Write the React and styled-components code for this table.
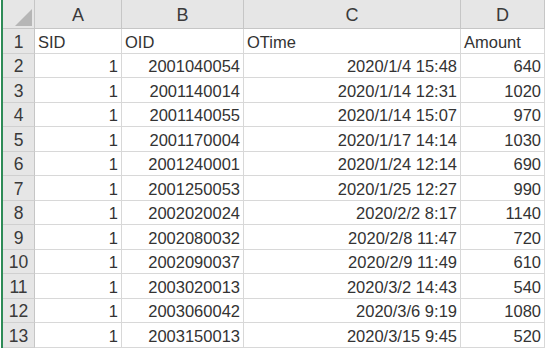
import React from "react";
import styled, { createGlobalStyle } from "styled-components";

const Global = createGlobalStyle`
  html, body { margin: 0; padding: 0; background: #ffffff; }
  body { font-family: "Liberation Sans", Arial, sans-serif; }
`;

const Frame = styled.div`
  width: 548px;
  height: 349px;
  overflow: hidden;
  background: #ffffff;
  padding-left: 1px;
  box-sizing: border-box;
`;

const Sheet = styled.div`
  display: grid;
  grid-template-columns: 32px 87px 122px 217px 84px;
  grid-template-rows: 29px repeat(13, 24.5px);
  border-left: 2px solid #2e8b57;
  width: max-content;
`;

const Corner = styled.div`
  position: relative;
  background: #e6e6e6;
  border-right: 1px solid #c6c6c6;
  border-bottom: 1px solid #c6c6c6;
  box-sizing: border-box;
`;

const Triangle = styled.div`
  position: absolute;
  right: 2px;
  bottom: 2px;
  width: 0;
  height: 0;
  border-left: 17px solid transparent;
  border-bottom: 17px solid #b6b6b6;
`;

const ColHead = styled.div`
  background: #e6e6e6;
  border-right: 1px solid #c6c6c6;
  border-bottom: 1px solid #c6c6c6;
  box-sizing: border-box;
  display: flex;
  align-items: center;
  justify-content: center;
  padding-top: 3px;
  font-size: 18px;
  color: #3a3a3a;
`;

const RowHead = styled.div`
  background: #e6e6e6;
  border-right: 1px solid #c6c6c6;
  border-bottom: 1px solid #d0d0d0;
  box-sizing: border-box;
  display: flex;
  align-items: center;
  justify-content: center;
  padding-top: 3px;
  font-size: 17.5px;
  color: #3a3a3a;
`;

const Cell = styled.div`
  border-right: 1px solid #d8d8d8;
  border-bottom: 1px solid #d8d8d8;
  box-sizing: border-box;
  display: flex;
  align-items: center;
  justify-content: ${(p) => (p.$num ? "flex-end" : "flex-start")};
  padding: 3px 3px 0 3px;
  font-size: 16.5px;
  color: #333333;
  white-space: nowrap;
  overflow: hidden;
`;

const rows = [
  ["1", "2001040054", "2020/1/4 15:48", "640"],
  ["1", "2001140014", "2020/1/14 12:31", "1020"],
  ["1", "2001140055", "2020/1/14 15:07", "970"],
  ["1", "2001170004", "2020/1/17 14:14", "1030"],
  ["1", "2001240001", "2020/1/24 12:14", "690"],
  ["1", "2001250053", "2020/1/25 12:27", "990"],
  ["1", "2002020024", "2020/2/2 8:17", "1140"],
  ["1", "2002080032", "2020/2/8 11:47", "720"],
  ["1", "2002090037", "2020/2/9 11:49", "610"],
  ["1", "2003020013", "2020/3/2 14:43", "540"],
  ["1", "2003060042", "2020/3/6 9:19", "1080"],
  ["1", "2003150013", "2020/3/15 9:45", "520"],
];

export default function App() {
  return (
    <Frame>
      <Global />
      <Sheet>
        <Corner>
          <Triangle />
        </Corner>
        {["A", "B", "C", "D"].map((c) => (
          <ColHead key={c}>{c}</ColHead>
        ))}
        <RowHead>1</RowHead>
        <Cell>SID</Cell>
        <Cell>OID</Cell>
        <Cell>OTime</Cell>
        <Cell>Amount</Cell>
        {rows.map((r, i) => (
          <React.Fragment key={i}>
            <RowHead>{i + 2}</RowHead>
            {r.map((v, j) => (
              <Cell key={j} $num>
                {v}
              </Cell>
            ))}
          </React.Fragment>
        ))}
      </Sheet>
    </Frame>
  );
}
